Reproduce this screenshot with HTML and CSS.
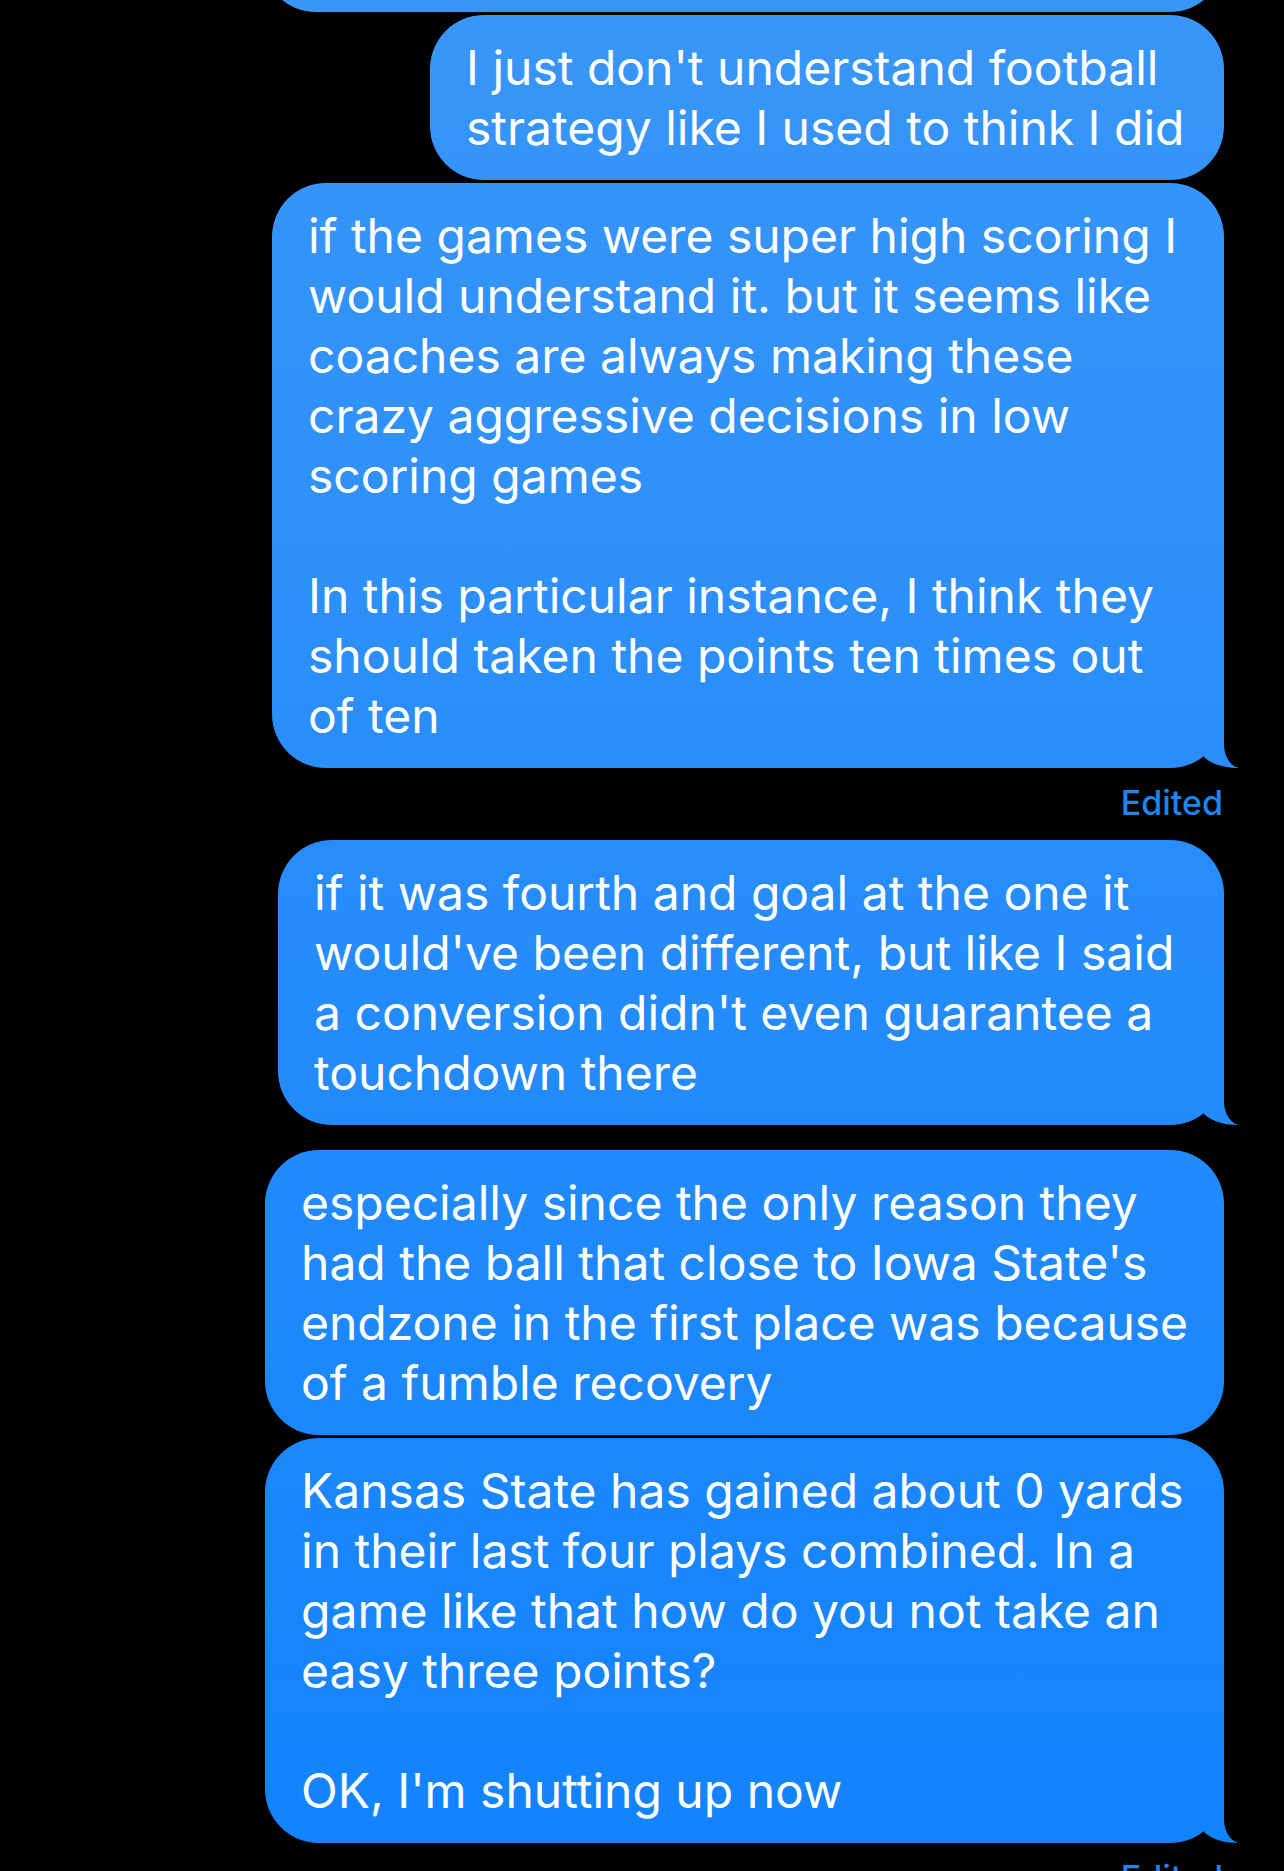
FILE: index.html
```html
<!DOCTYPE html>
<html lang="en">
<head>
<meta charset="utf-8">
<title>Messages</title>
<link rel="stylesheet" href="styles.css">
</head>
<body>
<main class="thread">
  <div class="bubble bubble-partial"></div>

  <div class="bubble w-794">I just don't understand football<br>strategy like I used to think I did</div>

  <div class="bubble w-952 has-tail">if the games were super high scoring I<br>would understand it. but it seems like<br>coaches are always making these<br>crazy aggressive decisions in low<br>scoring games<br><br>In this particular instance, I think they<br>should taken the points ten times out<br>of ten<span class="tail"></span></div>
  <div class="edited">Edited</div>

  <div class="bubble w-946 has-tail">if it was fourth and goal at the one it<br>would've been different, but like I said<br>a conversion didn't even guarantee a<br>touchdown there<span class="tail"></span></div>

  <div class="bubble w-959 group-start">especially since the only reason they<br>had the ball that close to Iowa State's<br>endzone in the first place was because<br>of a fumble recovery</div>

  <div class="bubble w-959 has-tail">Kansas State has gained about 0 yards<br>in their last four plays combined. In a<br>game like that how do you not take an<br>easy three points?<br><br>OK, I'm shutting up now<span class="tail"></span></div>
  <div class="edited">Edited</div>
</main>
</body>
</html>
```

FILE: styles.css
```css
html, body {
  margin: 0;
  padding: 0;
  background: #000;
}

body {
  width: 1284px;
  height: 1871px;
  overflow: hidden;
  font-family: "Inter", "Liberation Sans", sans-serif;
}

.thread {
  display: flex;
  flex-direction: column;
  align-items: flex-end;
  padding-right: 60px;
}

.bubble {
  position: relative;
  box-sizing: border-box;
  width: fit-content;
  padding: 22.5px 30px 22.5px 36px;
  border-radius: 54px;
  background: linear-gradient(180deg, #3996f7 0%, #268cfb 50%, #1283fe 100%) fixed;
  color: #fff;
  font-size: 48px;
  line-height: 60px;
  white-space: nowrap;
  margin-top: 3px;
}

.w-794 { width: 794px; }
.w-946 { width: 946px; }
.w-952 { width: 952px; }
.w-959 { width: 959px; }

.bubble-partial {
  width: 962px;
  height: 120px;
  margin-top: -108px;
  padding: 0;
}

.group-start {
  margin-top: 25px;
}

.tail {
  position: absolute;
  right: -16px;
  bottom: 0;
  width: 76px;
  height: 56px;
  background: inherit;
  clip-path: path("M 40 45 C 48 53, 62 56, 75 56 C 68 55, 60 46, 60 32 L 60 2 L 40 2 Z");
}

.edited {
  margin-top: 15px;
  margin-bottom: 14px;
  margin-right: 1px;
  font-size: 34px;
  line-height: 40px;
  font-weight: 500;
  color: #1c86f0;
}
```
